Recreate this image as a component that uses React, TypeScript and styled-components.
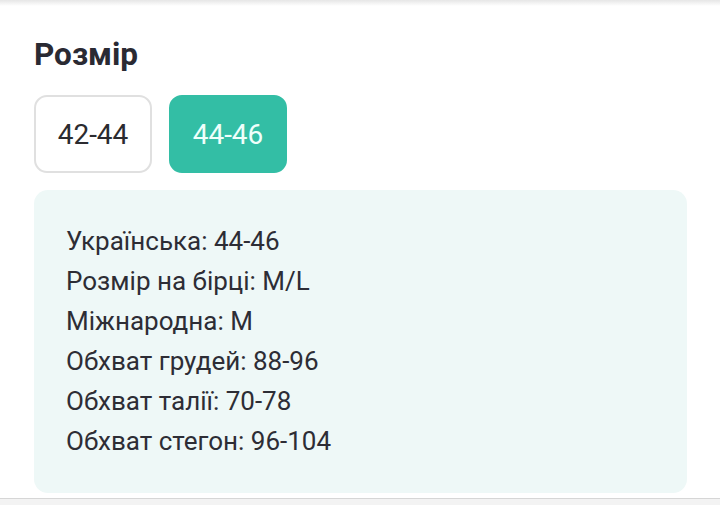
import React, { useState } from 'react';
import styled, { createGlobalStyle } from 'styled-components';

const sizes = [
    {
        label: '42-44',
        rows: [
            'Українська: 42-44',
            'Розмір на бірці: S/M',
            'Міжнародна: S',
            'Обхват грудей: 80-88',
            'Обхват талії: 62-70',
            'Обхват стегон: 88-96',
        ],
    },
    {
        label: '44-46',
        rows: [
            'Українська: 44-46',
            'Розмір на бірці: M/L',
            'Міжнародна: M',
            'Обхват грудей: 88-96',
            'Обхват талії: 70-78',
            'Обхват стегон: 96-104',
        ],
    },
];

export default function App() {
    const [active, setActive] = useState(1);

    return (<>
        <GlobalStyle />
        <Page>
            <TopShade />
            <Section>
                <Title>Розмір</Title>
                <SizeRow>
                    {sizes.map((s, k) => (
                        <SizeButton key={s.label} $active={k === active} onClick={() => setActive(k)}>
                            {s.label}
                        </SizeButton>
                    ))}
                </SizeRow>
                <InfoBox>
                    {sizes[active].rows.map((r) => <InfoRow key={r}>{r}</InfoRow>)}
                </InfoBox>
            </Section>
            <BottomBar />
        </Page>
    </>);
}

const GlobalStyle = createGlobalStyle`
    html, body {
        margin: 0;
        padding: 0;
        background: #ffffff;
    }
    body {
        font-family: Roboto, "Noto Sans", sans-serif;
        color: #2b2b33;
    }
`;

const Page = styled.div`
    width: 720px;
    height: 505px;
    display: flex;
    flex-direction: column;
    overflow: hidden;
`;

const TopShade = styled.div`
    height: 6px;
    flex-shrink: 0;
    background: linear-gradient(#e6e6e6, #ffffff);
`;

const Section = styled.div`
    flex: 1;
    display: flex;
    flex-direction: column;
    padding: 31px 33px 0 34px;
`;

const Title = styled.h2`
    margin: 0;
    font-size: 31.5px;
    line-height: 36px;
    font-weight: 700;
    color: #2a2a33;
`;

const SizeRow = styled.div`
    display: flex;
    gap: 17px;
    margin-top: 22px;
`;

const SizeButton = styled.button<{ $active: boolean }>`
    width: 118px;
    height: 78px;
    box-sizing: border-box;
    border-radius: 13px;
    border: 2px solid ${props => props.$active ? '#33bea5' : '#e0e0e0'};
    background: ${props => props.$active ? '#33bea5' : '#ffffff'};
    color: ${props => props.$active ? '#effffb' : '#2b2b30'};
    font-family: Roboto, sans-serif;
    font-size: 28px;
    padding: 0;
    cursor: pointer;
`;

const InfoBox = styled.div`
    margin-top: 17px;
    height: 303px;
    box-sizing: border-box;
    border-radius: 14px;
    background: #eef8f7;
    padding: 31px 32px;
    display: flex;
    flex-direction: column;
`;

const InfoRow = styled.div`
    font-size: 26px;
    line-height: 40px;
    color: #2d2d35;
`;

const BottomBar = styled.div`
    height: 6px;
    flex-shrink: 0;
    border-top: 1px solid #d6d6d6;
    background: #f3f3f3;
`;
